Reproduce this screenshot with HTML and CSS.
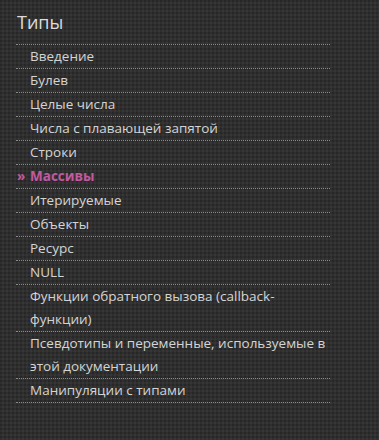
FILE: index.html
```html
<!DOCTYPE html>
<html lang="ru">
<head>
<meta charset="utf-8">
<link rel="stylesheet" href="styles.css">
</head>
<body>
<aside class="menu">
  <h2 class="menu-title">Типы</h2>
  <ul class="menu-list">
    <li><a href="#">Введение</a></li>
    <li><a href="#">Булев</a></li>
    <li><a href="#">Целые числа</a></li>
    <li><a href="#">Числа с плавающей запятой</a></li>
    <li><a href="#">Строки</a></li>
    <li class="current"><a href="#">Массивы</a></li>
    <li><a href="#">Итерируемые</a></li>
    <li><a href="#">Объекты</a></li>
    <li><a href="#">Ресурс</a></li>
    <li><a href="#">NULL</a></li>
    <li><a href="#">Функции обратного вызова (callback-функции)</a></li>
    <li><a href="#">Псевдотипы и переменные, используемые в этой документации</a></li>
    <li><a href="#">Манипуляции с типами</a></li>
  </ul>
</aside>
</body>
</html>
```

FILE: styles.css
```css
html, body {
  margin: 0;
  padding: 0;
}
body {
  background-color: #2f2f2f;
  background-image:
    radial-gradient(circle at 1px 1px, rgba(0,0,0,0.18) 1px, transparent 1.2px),
    radial-gradient(circle at 3px 3px, rgba(255,255,255,0.03) 1px, transparent 1.2px);
  background-size: 4px 4px, 4px 4px;
  font-family: "Open Sans", "Noto Sans", sans-serif;
  min-height: 440px;
}
.menu {
  padding: 9px 0 0 16px;
  width: 314px;
}
.menu-title {
  margin: 0 0 9px 1px;
  font-size: 18px;
  font-weight: normal;
  line-height: 26px;
  color: #dcdcdc;
}
.menu-list {
  list-style: none;
  margin: 0;
  padding: 0;
  border-top: 1px dotted #8a8a8a;
}
.menu-list li {
  border-bottom: 1px dotted #8a8a8a;
  padding: 0 0 0 14px;
  line-height: 23px;
  font-size: 13.5px;
  position: relative;
}
.menu-list a {
  color: #d4d4d4;
  text-decoration: none;
}
.menu-list li.current a {
  color: #c25a9f;
  font-weight: bold;
}
.menu-list li.current::before {
  content: "»";
  color: #c25a9f;
  font-weight: bold;
  position: absolute;
  left: 1px;
  top: 0;
}
```
